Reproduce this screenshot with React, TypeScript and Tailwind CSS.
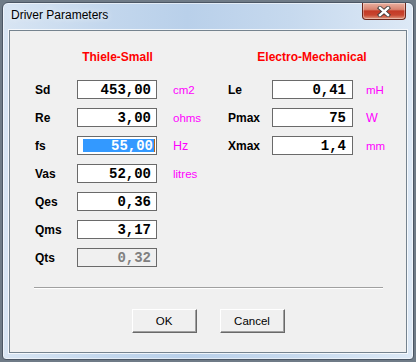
import React from "react";

type RowProps = {
  label: string;
  value: string;
  unit?: string;
  right?: boolean;
  selected?: boolean;
  disabled?: boolean;
  unitBig?: boolean;
};

function Row({ label, value, unit, right, selected, disabled, unitBig }: RowProps) {
  return (
    <div className="flex items-center h-[19px]">
      <div
        className={
          right
            ? "w-[44px] text-[12px] font-bold text-black leading-[14px]"
            : "w-[42px] text-[12px] font-bold text-black leading-[14px]"
        }
      >
        {label}
      </div>
      <div
        className={
          (right ? "w-[81px] pr-[6px] " : "w-[80px] pr-[5px] ") +
          (disabled ? "bg-[#f0f0f0] text-[#808080] " : "bg-white text-black ") +
          "h-[19px] border border-[#6a6a6a] flex items-center justify-end font-['Liberation_Mono',monospace] font-bold text-[14px] leading-[14px]"
        }
      >
        {selected ? (
          <div className="flex items-center w-full -mr-[4px]">
            <div className="ml-[1px] w-[73px] h-[13px] bg-[#3399ff] text-white flex items-center justify-end pr-[1px]">
              {value}
            </div>
            <div className="w-[1px] h-[13px] bg-[#b8661a]" />
          </div>
        ) : (
          value
        )}
      </div>
      {unit && (
        <div
          className={
            (right ? "ml-[13px] " : "ml-[16px] ") +
            (unitBig ? "text-[12.5px] " : "text-[11.5px] ") +
            "text-[#ff00ff] leading-[14px]"
          }
        >
          {unit}
        </div>
      )}
    </div>
  );
}

function Btn({ children }: { children: React.ReactNode }) {
  return (
    <button className="w-[65px] h-[24px] bg-[#f0f0f0] border border-t-white border-l-white border-r-[#696969] border-b-[#696969] shadow-[inset_-1px_-1px_0_#a0a0a0] text-[11.5px] text-black leading-[14px] flex items-center justify-center">
      {children}
    </button>
  );
}

export default function App() {
  return (
    <div className="w-[416px] h-[362px] bg-[#6f7b87] pt-[2px] px-[2px] font-['Liberation_Sans',Arial,sans-serif] overflow-hidden">
      <div className="w-[412px] h-[358px] rounded-t-[6px] rounded-b-[4px] border border-[#4b5664] bg-[linear-gradient(90deg,#d8e5f3_0%,#c3d7ed_25%,#b9d0ea_45%,#c6d9ee_70%,#dde9f6_100%)] shadow-[inset_0_0_0_1px_rgba(255,255,255,0.55)] flex flex-col">
        <div className="h-[27px] flex justify-between">
          <div className="pl-[8px] pt-[5px] text-[12px] leading-[14px] text-black [text-shadow:0_0_6px_rgba(255,255,255,0.9)]">
            Driver Parameters
          </div>
          <div className="mr-[7px] w-[44px] h-[17px] rounded-b-[4px] border border-t-0 border-[#6b261b] bg-[linear-gradient(180deg,#eab0a0_0%,#d98471_40%,#c43a26_50%,#c8452f_75%,#e09a80_100%)] shadow-[inset_0_0_0_1px_rgba(255,255,255,0.35)] flex items-center justify-center">
            <svg width="14" height="11" viewBox="0 0 14 11">
              <path d="M3 2 L11 9 M11 2 L3 9" stroke="#3b3b3b" strokeWidth="4.2" strokeLinecap="square" fill="none" />
              <path d="M3 2 L11 9 M11 2 L3 9" stroke="#ffffff" strokeWidth="2.4" strokeLinecap="square" fill="none" />
            </svg>
          </div>
        </div>
        <div className="mx-[6px] mb-[6px] flex-1 border border-[#75838f] bg-[#f0f0f0] shadow-[0_0_0_1px_rgba(255,255,255,0.75)] flex flex-col pt-[19px]">
          <div className="flex pl-[25px]">
            <div className="w-[193px] flex flex-col">
              <div className="w-[165px] text-center text-[12px] font-bold text-[#ff0000] leading-[14px]">
                Thiele-Small
              </div>
              <div className="mt-[16px] flex flex-col gap-[9px]">
                <Row label="Sd" value="453,00" unit="cm2" />
                <Row label="Re" value="3,00" unit="ohms" />
                <Row label="fs" value="55,00" unit="Hz" selected unitBig />
                <Row label="Vas" value="52,00" unit="litres" />
                <Row label="Qes" value="0,36" />
                <Row label="Qms" value="3,17" />
                <Row label="Qts" value="0,32" disabled />
              </div>
            </div>
            <div className="flex flex-col">
              <div className="w-[168px] text-center text-[12px] font-bold text-[#ff0000] leading-[14px]">
                Electro-Mechanical
              </div>
              <div className="mt-[16px] flex flex-col gap-[9px]">
                <Row label="Le" value="0,41" unit="mH" right />
                <Row label="Pmax" value="75" unit="W" right unitBig />
                <Row label="Xmax" value="1,4" unit="mm" right />
              </div>
            </div>
          </div>
          <div className="mt-[20px] ml-[24px] w-[349px] h-[2px] border-t border-t-[#a0a0a0] border-b border-b-white" />
          <div className="mt-[20px] flex justify-center gap-[23px]">
            <Btn>OK</Btn>
            <Btn>Cancel</Btn>
          </div>
        </div>
      </div>
    </div>
  );
}
